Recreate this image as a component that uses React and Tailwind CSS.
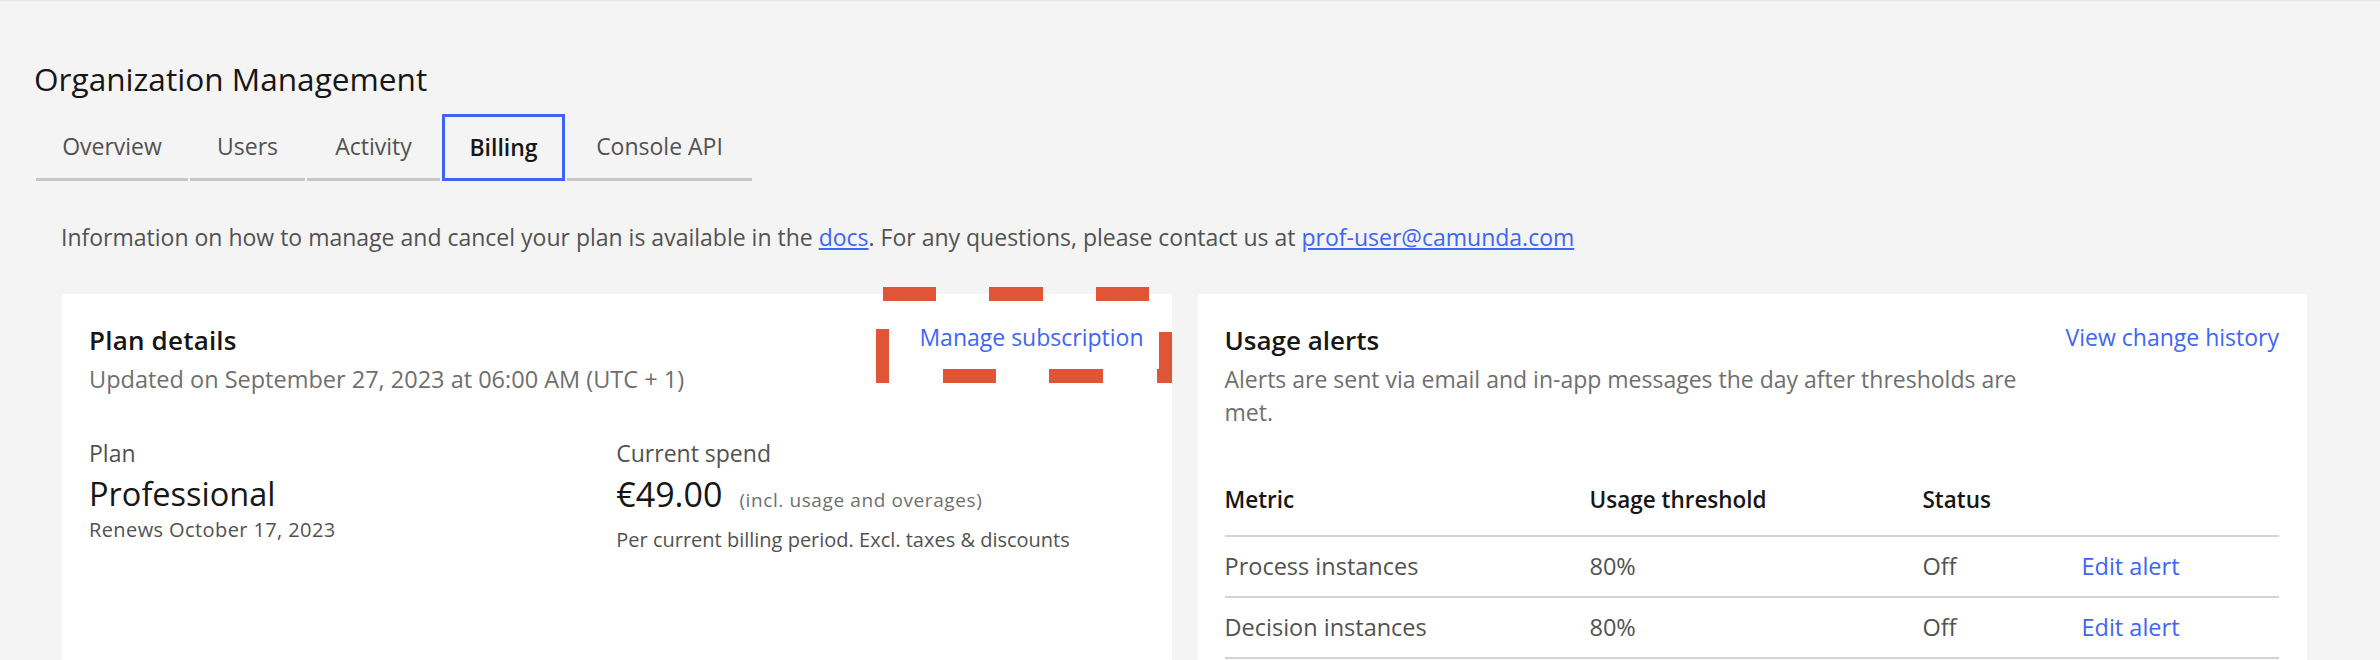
import React from 'react';

const tabs = [
  { label: 'Overview', w: 'w-[152px]' },
  { label: 'Users', w: 'w-[115px]' },
  { label: 'Activity', w: 'w-[133px]' },
  { label: 'Billing', w: 'w-[123px]', active: true },
  { label: 'Console API', w: 'w-[185px]' },
];

const alerts = [
  { metric: 'Process instances', threshold: '80%', status: 'Off' },
  { metric: 'Decision instances', threshold: '80%', status: 'Off' },
];

function DashedFrame() {
  // annotation box drawn around "Manage subscription"
  return (
    <svg
      className="absolute left-[814px] top-[-7px] pointer-events-none"
      width="296"
      height="96"
      viewBox="0 0 296 96"
    >
      <g fill="#e05535">
        <rect x="7" y="0" width="53" height="14" />
        <rect x="113" y="0" width="54" height="14" />
        <rect x="220" y="0" width="53" height="14" />
        <rect x="67" y="82" width="53" height="14" />
        <rect x="173" y="82" width="54" height="14" />
        <rect x="0" y="42" width="13" height="54" />
        <rect x="283" y="45" width="13" height="51" />
        <rect x="281" y="82" width="15" height="14" />
      </g>
    </svg>
  );
}

export default function App() {
  return (
    <div
      className="h-[660px] overflow-hidden bg-[#f4f4f4] border-t border-[#e4e4e4] text-[#161616]"
      style={{ fontFamily: '"Open Sans", "Noto Sans", sans-serif' }}
    >
      {/* Header */}
      <h1 className="pl-[34px] pt-[58px] text-[31.6px] leading-[40px] font-normal">
        Organization Management
      </h1>

      {/* Tabs */}
      <div className="flex gap-[2px] pl-[36px] mt-[15px]">
        {tabs.map((t) =>
          t.active ? (
            <div
              key={t.label}
              className={`${t.w} h-[67px] flex items-center justify-center border-[3px] border-[#3f63f2] text-[23px] font-semibold text-[#161616]`}
            >
              {t.label}
            </div>
          ) : (
            <div
              key={t.label}
              className={`${t.w} h-[67px] flex items-center justify-center border-b-[3px] border-[#c6c6c6] text-[23px] text-[#525252]`}
            >
              {t.label}
            </div>
          )
        )}
      </div>

      <div className="pl-[62px] pr-[73px]">
        <p className="mt-[40px] text-[23px] leading-[33px] text-[#525252] -ml-px">
          Information on how to manage and cancel your plan is available in the{' '}
          <a className="text-[#3e66f3] underline">docs</a>. For any questions, please contact us at{' '}
          <a className="text-[#3e66f3] underline">prof-user@camunda.com</a>
        </p>

        <div className="mt-[40px] grid grid-cols-2 gap-[26px]">
          {/* Plan details */}
          <div className="relative bg-white h-[420px] pt-[30px] pl-[27px] pr-[28px]">
            <DashedFrame />
            <div className="flex justify-between items-start">
              <div>
                <h2 className="text-[26px] leading-[32px] font-semibold tracking-[0.2px]">Plan details</h2>
                <p className="mt-[7px] text-[23.5px] leading-[33px] text-[#6f6f6f]">
                  Updated on September 27, 2023 at 06:00 AM (UTC + 1)
                </p>
              </div>
              <a className="text-[23px] leading-[26px] text-[#3e66f3]">Manage subscription</a>
            </div>

            <div className="grid grid-cols-2 mt-[42px]">
              <div>
                <div className="text-[23px] leading-[30px] text-[#525252]">Plan</div>
                <div className="mt-[6px] text-[32.5px] leading-[40px]">Professional</div>
                <div className="mt-[4px] text-[20px] leading-[24px] tracking-[0.4px] text-[#525252]">
                  Renews October 17, 2023
                </div>
              </div>
              <div>
                <div className="text-[23px] leading-[30px] text-[#525252]">Current spend</div>
                <div className="mt-[6px] flex items-baseline gap-[17px]">
                  <span className="text-[34px] leading-[40px]">€49.00</span>
                  <span className="text-[19px] tracking-[0.6px] text-[#6f6f6f]">(incl. usage and overages)</span>
                </div>
                <div className="mt-[13px] text-[20px] leading-[24px] text-[#525252]">
                  Per current billing period. Excl. taxes &amp; discounts
                </div>
              </div>
            </div>
          </div>

          {/* Usage alerts */}
          <div className="bg-white h-[420px] pt-[30px] pl-[27px] pr-[28px]">
            <div className="flex justify-between items-start gap-[24px]">
              <div className="flex-1">
                <h2 className="text-[26px] leading-[32px] font-semibold">Usage alerts</h2>
                <p className="mt-[7px] text-[23px] leading-[33px] text-[#6f6f6f]">
                  Alerts are sent via email and in-app messages the day after thresholds are
                  <br />
                  met.
                </p>
              </div>
              <a className="text-[23px] leading-[26px] text-[#3e66f3]">View change history</a>
            </div>

            <div className="mt-[35px]">
              <div className="grid grid-cols-[365px_333px_159px_1fr] items-center h-[73px] border-b-2 border-[#d3d3d3] text-[22.5px] font-semibold">
                <div>Metric</div>
                <div>Usage threshold</div>
                <div>Status</div>
                <div />
              </div>
              {alerts.map((a) => (
                <div
                  key={a.metric}
                  className="grid grid-cols-[365px_333px_159px_1fr] items-center h-[61px] border-b-2 border-[#d3d3d3] text-[23.5px] text-[#525252]"
                >
                  <div>{a.metric}</div>
                  <div>{a.threshold}</div>
                  <div>{a.status}</div>
                  <a className="text-[#3e66f3]">Edit alert</a>
                </div>
              ))}
            </div>
          </div>
        </div>
      </div>
    </div>
  );
}
